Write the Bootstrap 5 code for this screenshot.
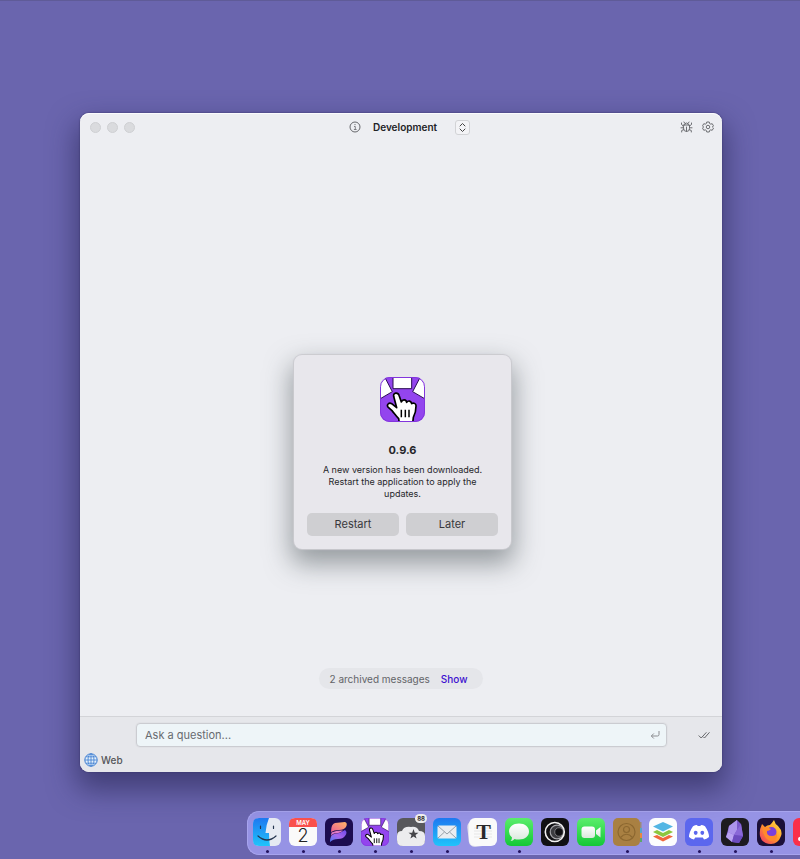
<!DOCTYPE html>
<html lang="en">
<head>
<meta charset="utf-8">
<meta name="viewport" content="width=device-width, initial-scale=1">
<title>Development</title>
<link rel="stylesheet" href="https://cdn.jsdelivr.net/npm/bootstrap@5.3.0/dist/css/bootstrap.min.css">
<style>
body{background:#6a65ae;font-family:Inter,"Liberation Sans",sans-serif;font-size:10px;line-height:16px;color:#26262a;border-top:1px solid #5f5b98}
.stage{padding:112px 78px 39px 80px}
.app-window{background:#edeef2;border-radius:9px;box-shadow:0 0 1px 1px rgba(60,55,110,.35),0 14px 28px 4px rgba(38,36,84,.6),inset 0 1px 0 #fbfbfd}
.titlebar{height:28px;padding:0 8px 0 10px}
.lights{gap:6px}
.tools{gap:9px}
.light{width:11px;height:11px;border-radius:50%;background:#dadbde;border:1px solid #cfd0d3}
.title-group{padding-left:15px}
.title-name{font-weight:600;margin:0 18px 0 12px;color:#222226}
.plain{border:0;background:none;padding:0;display:flex;color:#66676b}
.stepper{width:15px;height:15px;border:1px solid #d2d3d6;border-radius:3px;background:#f3f3f6;align-items:center;justify-content:center;color:#444}
.archive{background:#e5e6ea;border-radius:11px;padding:3px 15px 2px 10px;gap:11px;margin-bottom:27px;color:#636468}
.archive a{color:#3c12d0;text-decoration:none;font-weight:500}
.composer{background:#e6e7eb;border-top:1px solid #d3d4d8;border-radius:0 0 9px 9px;padding:6px 0 4px}
.ask{border:1px solid #cbccd1;border-radius:4px;background:#eef5f8;height:24px;margin-left:56px;padding-right:6px;color:#8b8c90;box-shadow:0 0 0 1px #e1e2e6}
.ask input{border:0;background:none;outline:0;padding:0 0 0 8px;font-size:11px;min-width:0;color:#333}
.ask input::placeholder{color:#686b70;opacity:1}
.composer-end{width:55px;padding-right:12px}
.web{padding:5px 0 0 4px;gap:3px;font-weight:500;color:#55565a}
.overlay{padding:18px 0 0 3px}
.alert-box{width:217px;background:#e8e7ec;border-radius:8px;padding:22px 13px 13px;box-shadow:0 0 1px 1px #cacacf,0 12px 26px 3px rgba(65,75,80,.5)}
.alert-box h1{font-size:11px;line-height:16px;font-weight:700;margin:20px 0 6px}
.alert-box p{font-size:9px;line-height:12px;margin:0 0 13px;padding:0 10px}
.choice{border:0;border-radius:5px;background:#cfcfd2;height:23px;font-size:11px;color:#38383c;padding:0}
.dock{background:#9693e5;border:1px solid #a7a4ee;border-right:0;border-radius:12px 0 0 12px;margin:0 0 4px 247px;height:44px;gap:8px;padding:6px 0 0 5px;overflow:hidden}
.dock-item{position:relative;flex:0 0 28px;height:36px;text-decoration:none}
.dock-item>svg{display:block}
.running::after{content:"";display:block;width:3px;height:3px;border-radius:50%;background:#23145f;margin:4px auto 0}
.unread{position:absolute;right:-2px;top:-4px;background:#eee;color:#333;border-radius:5px;font-size:6px;line-height:9px;padding:0 2px;font-weight:700}
</style>
</head>
<body class="d-flex flex-column min-vh-100 overflow-hidden">
<svg width="0" height="0" class="position-absolute" aria-hidden="true">
<defs>
<clipPath id="tile"><rect width="135" height="135" rx="29"/></clipPath>
<linearGradient id="sky" x2="0" y2="1"><stop stop-color="#1e78f0"/><stop offset="1" stop-color="#20c4fb"/></linearGradient>
<linearGradient id="leaf" x2="0" y2="1"><stop stop-color="#5bee6c"/><stop offset="1" stop-color="#14c837"/></linearGradient>
<linearGradient id="pearl" x2="0" y2="1"><stop stop-color="#fff"/><stop offset="1" stop-color="#d9e8dc"/></linearGradient>
<linearGradient id="bloom" x1="1" x2="0" y2="1"><stop stop-color="#ffb566"/><stop offset="1" stop-color="#ec5f95"/></linearGradient>
<linearGradient id="dusk" x1="1" x2="0" y2="1"><stop stop-color="#6a48e8"/><stop offset=".5" stop-color="#a765ec"/><stop offset="1" stop-color="#4f7cf2"/></linearGradient>
<linearGradient id="flame" x1="1" x2="0" y2="1"><stop stop-color="#ffe64b"/><stop offset=".5" stop-color="#ff9828"/><stop offset="1" stop-color="#f0326b"/></linearGradient>
<symbol id="pointer-app" viewBox="0 0 135 135">
<g clip-path="url(#tile)"><rect width="135" height="135" fill="#9345ee"/>
<g fill="#fff" stroke="#2b0c55" stroke-width="3"><path d="M39-3H95V35H39Z"/><path d="M-4-4H12L37 44L-4 68Z"/><path d="M139-4H123L98 44L139 68Z"/></g>
<path d="M41 58C39 46 54 45 57 55L64 75C67 66 79 67 80 76C85 69 94 72 95 80C100 76 109 79 108 88C108 101 105 112 100 121L98 139H58L56 125C49 118 42 108 36 101L25 91C18 83 27 76 35 80L50 92Z" fill="#fff" stroke="#000" stroke-width="5" stroke-linejoin="round"/>
<path d="M64 98V121M76 98V121M87 98V121" stroke="#000" stroke-width="4.5"/></g>
<rect x="1.5" y="1.5" width="132" height="132" rx="28" fill="none" stroke="#8235dc" stroke-width="3"/>
</symbol>
</defs></svg>

<main class="stage d-flex flex-column flex-grow-1">
<section class="app-window position-relative d-flex flex-column flex-grow-1">
<header class="titlebar d-flex align-items-center">
<div class="lights d-flex flex-fill w-25"><span class="light"></span><span class="light"></span><span class="light"></span></div>
<div class="title-group d-flex align-items-center">
<button class="plain" aria-label="Information"><svg width="12" height="12" viewBox="0 0 12 12" fill="none" stroke="currentColor"><circle cx="6" cy="6" r="5"/><path d="M5 5.5H6.3V8.5M4.9 8.5H7.6" stroke-width=".8"/><circle cx="6" cy="3.6" r=".6" fill="currentColor" stroke="none"/></svg></button>
<span class="title-name">Development</span>
<button class="plain stepper" aria-label="Choose workspace"><svg width="9" height="11" viewBox="0 0 9 11" fill="none" stroke="currentColor" stroke-linecap="round" stroke-linejoin="round"><path d="M2 4L4.500 1.500L7 4M2 7L4.500 9.500L7 7"/></svg></button>
</div>
<div class="tools d-flex flex-fill w-25 justify-content-end">
<button class="plain" aria-label="Debug"><svg width="13" height="12" viewBox="0 0 13 12" fill="none" stroke="currentColor" stroke-width=".95" stroke-linecap="round"><path d="M3.500 4H9.500V7.500A3 3 0 0 1 3.500 7.500ZM4.500 4A2 2 0 0 1 8.500 4M6.500 6V10.300M4.700 2.200L4 1M8.300 2.200L9 1M3.500 5L1.500 3.500V2M9.500 5L11.500 3.500V2M3.500 6.800H1M9.500 6.800H12M3.700 8.600L1.700 9.500V11M9.300 8.600L11.300 9.500V11"/></svg></button>
<button class="plain" aria-label="Settings"><svg width="12" height="12" viewBox="0 0 24 24" fill="none" stroke="currentColor" stroke-width="1.900" stroke-linejoin="round"><circle cx="12" cy="12" r="3.500"/><path d="M9.500 2H14.500L15.200 5L17.500 6.300L20.400 5.400L23 9.700L20.700 12L23 14.300L20.400 18.600L17.500 17.700L15.200 19L14.500 22H9.500L8.800 19L6.500 17.700L3.600 18.600L1 14.300L3.300 12L1 9.700L3.600 5.400L6.500 6.300L8.800 5Z"/></svg></button>
</div>
</header>
<div class="flex-grow-1 d-flex align-items-end justify-content-center">
<div class="archive d-flex"><span>2 archived messages</span><a href="#">Show</a></div>
</div>
<footer class="composer">
<div class="d-flex align-items-center">
<div class="ask d-flex align-items-center flex-grow-1">
<input class="flex-grow-1" type="text" aria-label="Ask a question" placeholder="Ask a question...">
<svg width="10" height="10" viewBox="0 0 10 10" fill="none" stroke="currentColor"><path d="M9 1V4.500Q9 6 7.500 6H1.500M3.800 3.500L1.300 6L3.800 8.500"/></svg>
</div>
<div class="composer-end d-flex justify-content-end"><button class="plain" aria-label="Mark all done"><svg width="12" height="10" viewBox="0 0 12 10" fill="none" stroke="currentColor"><path d="M.7 5.500L3.200 8L8.400 2.300M5.400 6.900L6.500 8L11.500 2.300"/></svg></button></div>
</div>
<div class="web d-flex align-items-center"><svg width="14" height="14" viewBox="0 0 14 14" fill="#e4f0fb" stroke="#3a7bd0"><circle cx="7" cy="7" r="6.200"/><ellipse cx="7" cy="7" rx="3" ry="6.200" fill="none" stroke-width=".8"/><path d="M7 1V13M1 7H13M2 3.800H12M2 10.200H12" stroke-width=".8"/></svg><span>Web</span></div>
</footer>
<div class="overlay position-absolute top-0 start-0 w-100 h-100 d-flex align-items-center justify-content-center">
<div class="alert-box text-center" role="alertdialog" aria-labelledby="ver" aria-describedby="msg">
<svg class="d-block mx-auto" width="45" height="45"><use href="#pointer-app"/></svg>
<h1 id="ver">0.9.6</h1>
<p id="msg">A new version has been downloaded. Restart the application to apply the updates.</p>
<div class="d-flex" style="gap:7px"><button class="choice flex-fill w-50">Restart</button><button class="choice flex-fill w-50">Later</button></div>
</div>
</div>
</section>
</main>

<nav class="dock d-flex" aria-label="Dock">
<a class="dock-item running" href="#" aria-label="Finder"><svg width="28" height="28" viewBox="0 0 28 28"><rect width="28" height="28" rx="6" fill="#e6eaf2"/><path d="M6 0H16Q13 7 12.500 15H16Q16 22 17 28H6Q0 28 0 22V6Q0 0 6 0Z" fill="url(#sky)"/><path d="M7.500 8V10.500M20.500 8V10.500M5 18Q14 26 23 18" fill="none" stroke="#24344e" stroke-width="1.200" stroke-linecap="round"/></svg></a>
<a class="dock-item running" href="#" aria-label="Calendar"><svg width="28" height="28" viewBox="0 0 28 28"><rect width="28" height="28" rx="6" fill="#fafafa"/><path d="M0 9V6Q0 0 6 0H22Q28 0 28 6V9Z" fill="#f9504c"/><text x="14" y="7" text-anchor="middle" font-size="6" font-weight="600" fill="#fff">MAY</text><text x="14" y="24" text-anchor="middle" font-size="18" font-weight="300" fill="#222">2</text></svg></a>
<a class="dock-item running" href="#" aria-label="Bloom"><svg width="28" height="28" viewBox="0 0 28 28"><rect width="28" height="28" rx="6" fill="#1c0d50"/><path d="M6 14Q6 6 10 5Q15 4.500 20 4Q23 5 21 9Q19 12 14 12Q9 12 6 14Z" fill="url(#bloom)"/><path d="M5 24Q5 17 9 16Q15 15.500 20 12Q23 14 20 18Q18 21 13 21Q8 21 5 24Z" fill="url(#dusk)"/><path d="M6.500 14.500Q12 12 18 12.500Q15 15.500 9 15.500Q7 16 6 18Z" fill="#e07ac4"/></svg></a>
<a class="dock-item running" href="#" aria-label="Pointer"><svg width="28" height="28"><use href="#pointer-app"/></svg></a>
<a class="dock-item running" href="#" aria-label="Cloud, 88 unread"><svg width="28" height="28" viewBox="0 0 28 28"><rect width="28" height="28" rx="6" fill="#58585c"/><path d="M0 18Q0 13 5 13Q7 8 14 9Q20 8 22 13Q28 13 28 18V22Q28 28 22 28H6Q0 28 0 22Z" fill="#ececee"/><path d="M16.500 11L17.800 14.700H21.500L18.500 17L19.600 20.600L16.500 18.500L13.400 20.600L14.500 17L11.500 14.700H15.200Z" fill="#454549"/></svg><span class="unread">88</span></a>
<a class="dock-item running" href="#" aria-label="Mail"><svg width="28" height="28" viewBox="0 0 28 28"><rect width="28" height="28" rx="6" fill="url(#sky)"/><rect x="4.500" y="7.500" width="19" height="13" rx="1.500" fill="#e9edf1"/><path d="M5 8L14 16L23 8M5 20L11.500 14M23 20L16.500 14" fill="none" stroke="#8d979f" stroke-width=".9"/></svg></a>
<a class="dock-item" href="#" aria-label="Typora"><svg width="28" height="28" viewBox="0 0 28 28" overflow="visible"><rect x="-1" y="2" width="26" height="26" rx="6" fill="#e7e7ed" transform="rotate(-6 13 15)"/><rect width="28" height="28" rx="6" fill="#fafafa"/><path d="M5 10H23M5 13H23M5 16H23M5 19H23" stroke="#ddd" stroke-width=".7"/><text x="14.500" y="21" text-anchor="middle" font-family="Liberation Serif,serif" font-weight="700" font-size="22" fill="#292929">T</text></svg></a>
<a class="dock-item running" href="#" aria-label="Messages"><svg width="28" height="28" viewBox="0 0 28 28"><rect width="28" height="28" rx="6" fill="url(#leaf)"/><path d="M14 5.500C20 5.500 24 9 24 13.500S20 21.500 14 21.500Q11 21.500 9.500 21Q8 23 5.500 23Q7 21.500 7 19.500Q4 17 4 13.500C4 9 8 5.500 14 5.500Z" fill="url(#pearl)"/></svg></a>
<a class="dock-item" href="#" aria-label="Eclipse"><svg width="28" height="28" viewBox="0 0 28 28" fill="none"><rect width="28" height="28" rx="6" fill="#111114"/><circle cx="16" cy="14" r="6.800" fill="#3c3c40" stroke="#a6a6aa" stroke-width="1.200"/><circle cx="18" cy="14" r="4.300" fill="#111114" stroke="#77777b"/><circle cx="13.800" cy="14" r="9.500" stroke="#f2f2f2" stroke-width="1.600"/></svg></a>
<a class="dock-item" href="#" aria-label="FaceTime"><svg width="28" height="28" viewBox="0 0 28 28"><rect width="28" height="28" rx="6" fill="url(#leaf)"/><rect x="4.500" y="8.500" width="13.500" height="11.500" rx="3" fill="url(#pearl)"/><path d="M19 12.500L23.500 9V19.500L19 16Z" fill="url(#pearl)"/></svg></a>
<a class="dock-item running" href="#" aria-label="Contacts"><svg width="28" height="28" viewBox="0 0 28 28" overflow="visible"><path d="M27 4H28.500V10H27Z" fill="#9b8a78"/><path d="M27 10H29V15H27Z" fill="#57a6c8"/><path d="M27 15H29V20H27Z" fill="#e88642"/><path d="M27 20H29V24H27Z" fill="#5ca66a"/><rect width="27" height="28" rx="5" fill="#a98042"/><g fill="none" stroke="#8c6730" stroke-width="1.200"><circle cx="13.500" cy="14" r="8.500"/><circle cx="13.500" cy="11.500" r="3"/><path d="M7.500 19.500Q13.500 13 19.500 19.500"/></g></svg></a>
<a class="dock-item" href="#" aria-label="Stack"><svg width="28" height="28" viewBox="0 0 28 28"><rect width="28" height="28" rx="6" fill="#fcfdfe"/><path d="M4 18.500L8 17L14 20L20 17L24 18.500L14 23.500Z" fill="#f0673d"/><path d="M4 14L8 12L14 15L20 12L24 14L14 19Z" fill="#8cc63f"/><path d="M4 8.500L14 4L24 8.500L14 13.500Z" fill="#53b6e4"/></svg></a>
<a class="dock-item running" href="#" aria-label="Discord"><svg width="28" height="28" viewBox="0 0 28 28"><rect width="28" height="28" rx="6" fill="#5b67ee"/><path d="M8 8.200Q10 7 12 7L12.700 8H15.300L16 7Q18 7 20 8.200Q24 14 24 19Q21.500 21 19 21.500L17.800 19.500H10.200L9 21.500Q6.500 21 4 19Q4 14 8 8.200Z" fill="#fff"/><ellipse cx="10.700" cy="14.800" rx="1.900" ry="2.100" fill="#5b67ee"/><ellipse cx="17.300" cy="14.800" rx="1.900" ry="2.100" fill="#5b67ee"/></svg></a>
<a class="dock-item running" href="#" aria-label="Obsidian"><svg width="28" height="28" viewBox="0 0 28 28"><rect width="28" height="28" rx="6" fill="#1d1b20"/><path d="M16 2L20 6L22 18L18 25L11 24L5 19L8 8Z" fill="#7a58cb"/><path d="M16 2L8 8L7 14L13 17L16 12Z" fill="#ac94ec"/><path d="M5 19L7 14L13 17L11 24Z" fill="#b9a2f2"/><path d="M16 12L20 6L22 18L13 17Z" fill="#8a68d8"/><path d="M13 17L22 18L18 25L11 24Z" fill="#6d4cc0"/></svg></a>
<a class="dock-item running" href="#" aria-label="Firefox"><svg width="28" height="28" viewBox="0 0 28 28"><rect width="28" height="28" rx="6" fill="#1c1038"/><path d="M5 6L8 9Q10 7 13 7Q15 5 17 2Q18 6 21 8Q26 13 24 18Q21 26 14 26Q5 26 3 18Q2 12 5 6Z" fill="url(#flame)"/><circle cx="14.500" cy="14" r="5" fill="#7b3fdc"/><path d="M5 10Q10 8 14 11Q12 13 10 13Q9 18 15 18Q19 18 20 15Q21 23 13 23Q7 21 5 10Z" fill="#ff8a2c"/></svg></a>
<a class="dock-item" href="#" aria-label="Music"><svg width="28" height="28" viewBox="0 0 28 28"><rect width="28" height="28" rx="6" fill="#fa3049"/><ellipse cx="8" cy="21" rx="3" ry="2.300" fill="#fff"/><path d="M10 21V8L20 6V18" fill="none" stroke="#fff" stroke-width="2"/></svg></a>
</nav>
<script src="https://cdn.jsdelivr.net/npm/bootstrap@5.3.0/dist/js/bootstrap.bundle.min.js"></script>
</body>
</html>
